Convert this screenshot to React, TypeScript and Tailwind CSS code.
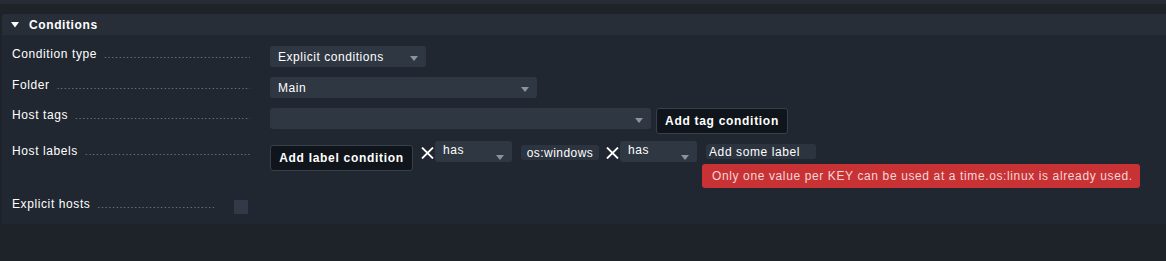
import React from 'react';

const font = { fontFamily: '"Liberation Sans", Arial, sans-serif' };

function Arrow() {
  return (
    <svg width="8" height="5" viewBox="0 0 8 5" className="shrink-0">
      <path d="M0 0 L8 0 L4 5 Z" fill="#8c939c" />
    </svg>
  );
}

function Select({ value, width, top = false }: { value: string; width: string; top?: boolean }) {
  return (
    <div
      className={`${width} h-[21px] bg-[#2f3742] rounded-[3px] flex justify-between pl-2 pr-2 text-[12px] tracking-[0.55px] text-white ${
        top ? 'items-start pt-[2px]' : 'items-center'
      }`}
    >
      <span className="leading-[14px]">{value}</span>
      <span className={top ? 'mt-[12px]' : 'mt-[3px]'}>
        <Arrow />
      </span>
    </div>
  );
}

function Button({ children, width }: { children: React.ReactNode; width: string }) {
  return (
    <div
      className={`${width} h-[26px] bg-[#10151c] border border-[#38404c] rounded-[3px] flex items-center justify-center text-[12px] font-bold tracking-[0.7px] text-white`}
    >
      {children}
    </div>
  );
}

function Cross() {
  return (
    <svg width="13" height="12" viewBox="0 0 13 12" className="shrink-0">
      <path d="M1 0.5 L12 11.5 M12 0.5 L1 11.5" stroke="#ffffff" strokeWidth="1.8" />
    </svg>
  );
}

function Label({ text, end = 'w-[258px]' }: { text: string; end?: string }) {
  return (
    <div className={`${end} shrink-0 flex items-baseline pr-[20px] text-[12px] tracking-[0.6px] text-white leading-[16px]`}>
      <span className="whitespace-nowrap">{text}</span>
      <span className="ml-[7px] flex-1 overflow-hidden whitespace-nowrap text-[#8d959f] text-[9px] tracking-[1.2px]">
        {'.'.repeat(120)}
      </span>
    </div>
  );
}

export default function App() {
  return (
    <div className="w-[1166px] h-[261px] bg-[#1e2229] overflow-hidden" style={font}>
      <div className="h-[4px] bg-[#262b35]" />
      <div className="mt-[10px] ml-[2px] bg-[#212730] rounded-tl-[3px] h-[210px]">
        <div className="h-[21px] bg-[#272e38] rounded-tl-[3px] flex items-center pl-[9px]">
          <svg width="8" height="6" viewBox="0 0 8 6" className="mt-[1px]">
            <path d="M0 0 L8 0 L4 5.5 Z" fill="#ffffff" />
          </svg>
          <span className="ml-[10px] text-[12px] font-bold tracking-[0.6px] text-white">Conditions</span>
        </div>

        <div className="pl-[10px] pt-[11px] flex flex-col">
          <div className="flex items-start">
            <Label text="Condition type" />
            <Select value="Explicit conditions" width="w-[156px]" />
          </div>

          <div className="flex items-start mt-[10px]">
            <Label text="Folder" />
            <Select value="Main" width="w-[267px]" />
          </div>

          <div className="flex items-start mt-[10px]">
            <div className="-mt-[1px]"><Label text="Host tags" /></div>
            <Select value="" width="w-[381px]" />
            <div className="ml-[5px]">
              <Button width="w-[132px]">Add tag condition</Button>
            </div>
          </div>

          <div className="flex items-start mt-[7px]">
            <div className="mt-[2px]"><Label text="Host labels" /></div>
            <div className="mt-[4px]">
              <Button width="w-[143px]">Add label condition</Button>
            </div>
            <div className="ml-[8px] mt-[6px]"><Cross /></div>
            <div className="ml-[1px]">
              <Select value="has" width="w-[77px]" top />
            </div>
            <div className="ml-[9px] mt-[4px] h-[15px] w-[78px] bg-[#2c343f] rounded-[3px] flex items-center justify-center text-[12px] tracking-[0.45px] text-white">
              os:windows
            </div>
            <div className="ml-[7px] mt-[6px]"><Cross /></div>
            <div className="ml-[1px]">
              <Select value="has" width="w-[77px]" top />
            </div>
            <div className="ml-[9px] mt-[3px] flex flex-col items-start">
              <div className="w-[110px] h-[15px] bg-[#2c343f] rounded-[3px] flex items-center pl-[3px] text-[12px] tracking-[0.6px] text-white">
                Add some label
              </div>
              <div className="-ml-[4px] mt-[5px] w-[438px] h-[24px] bg-[#c93234] rounded-[3px] flex items-center pl-[10px] text-[12px] tracking-[0.62px] text-[#f3d6d6] whitespace-nowrap">
                Only one value per KEY can be used at a time.os:linux is already used.
              </div>
            </div>
          </div>

          <div className="flex items-start mt-[8px]">
            <Label text="Explicit hosts" end="w-[222px]" />
            <div className="mt-[4px] w-[14px] h-[14px] bg-[#313a46] rounded-[1px]" />
          </div>
        </div>
      </div>
    </div>
  );
}
